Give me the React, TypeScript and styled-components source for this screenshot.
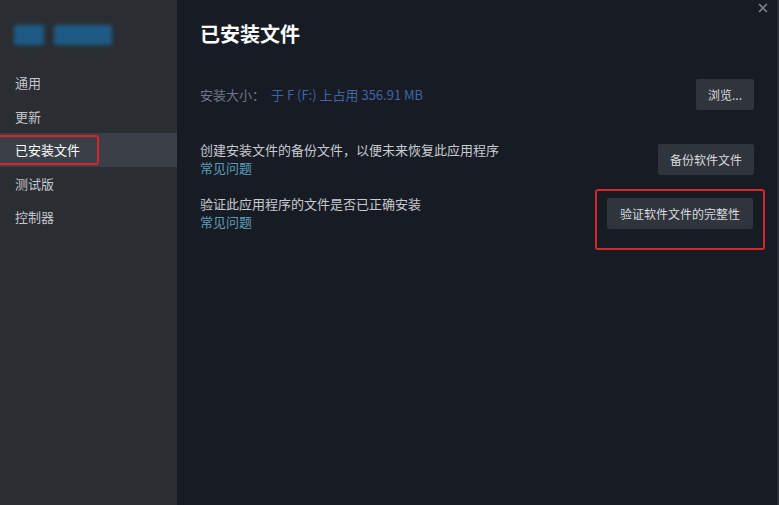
import React from 'react';
import styled, { createGlobalStyle } from 'styled-components';

const GlobalStyle = createGlobalStyle`
  html, body {
    margin: 0;
    padding: 0;
    background: #171c24;
  }
  body {
    font-family: "Noto Sans CJK SC", "Noto Sans", sans-serif;
  }
`;

const navItems = ['通用', '更新', '已安装文件', '测试版', '控制器'];

const App: React.FC = () => {
  return (
    <>
      <GlobalStyle />
      <Window>
        <Sidebar>
          <Logo>
            <LogoBlock $w={30} />
            <LogoBlock $w={58} />
          </Logo>
          <Nav>
            {navItems.map((item) => (
              <NavItem key={item} $active={item === '已安装文件'}>
                {item === '已安装文件' ? <Marked>{item}</Marked> : item}
              </NavItem>
            ))}
          </Nav>
        </Sidebar>
        <Main>
          <Close viewBox="0 0 10 10" aria-label="关闭">
            <path d="M1 1 L9 9 M9 1 L1 9" />
          </Close>
          <Title>已安装文件</Title>
          <SizeRow>
            <SizeText>
              <Label>安装大小：</Label>
              <Value>于 F (F:) 上占用 356.91 MB</Value>
            </SizeText>
            <Button>浏览...</Button>
          </SizeRow>
          <Row $gap={31}>
            <Info>
              <Desc>创建安装文件的备份文件，以便未来恢复此应用程序</Desc>
              <Faq>常见问题</Faq>
            </Info>
            <Button>备份软件文件</Button>
          </Row>
          <Row $gap={12}>
            <Info>
              <Desc>验证此应用程序的文件是否已正确安装</Desc>
              <Faq>常见问题</Faq>
            </Info>
            <Highlight>
              <Button $wide>验证软件文件的完整性</Button>
            </Highlight>
          </Row>
        </Main>
      </Window>
    </>
  );
};

const Window = styled.div`
  display: flex;
  width: 779px;
  height: 505px;
  overflow: hidden;
`;

const Sidebar = styled.aside`
  width: 177px;
  flex-shrink: 0;
  background: #2a2d32;
  padding-top: 25px;
  box-sizing: border-box;
`;

const Logo = styled.div`
  display: flex;
  gap: 10px;
  margin-left: 14px;
  height: 20px;
  filter: blur(2px);
`;

const LogoBlock = styled.div<{ $w: number }>`
  width: ${(p) => p.$w}px;
  height: 20px;
  background: #1d5b86;
`;

const Nav = styled.nav`
  display: flex;
  flex-direction: column;
  margin-top: 21px;
`;

const NavItem = styled.div<{ $active?: boolean }>`
  height: 33.5px;
  display: flex;
  align-items: center;
  padding-left: ${(p) => (p.$active ? '0' : '15px')};
  font-size: 13px;
  color: ${(p) => (p.$active ? '#ffffff' : '#c3c6cc')};
  background: ${(p) => (p.$active ? '#3b3f47' : 'transparent')};
`;

const Marked = styled.span`
  display: inline-flex;
  align-items: center;
  height: 26px;
  padding: 0 17px 0 15px;
  border: 2px solid #d4262b;
  border-left: none;
  border-radius: 0 3px 3px 0;
`;

const Main = styled.main`
  position: relative;
  flex: 1;
  background: #171c24;
  padding: 19px 23px 0 23px;
  box-sizing: border-box;
  border-right: 2px solid #2a2e36;
`;

const Close = styled.svg`
  position: absolute;
  top: 3px;
  right: 9px;
  width: 10px;
  height: 10px;
  stroke: #7b808a;
  stroke-width: 1.6;
  fill: none;
`;

const Title = styled.h1`
  margin: 0;
  font-size: 20px;
  font-weight: 700;
  color: #ffffff;
  line-height: 30px;
`;

const SizeRow = styled.div`
  display: flex;
  justify-content: space-between;
  align-items: center;
  margin-top: 30px;
`;

const SizeText = styled.div`
  display: flex;
  gap: 6px;
  font-size: 13px;
`;

const Label = styled.span`
  color: #6f7786;
`;

const Value = styled.span`
  color: #3f64a8;
`;

const Row = styled.div<{ $gap: number }>`
  display: flex;
  justify-content: space-between;
  align-items: center;
  margin-top: ${(p) => p.$gap}px;
`;

const Info = styled.div`
  display: flex;
  flex-direction: column;
  font-size: 13px;
  line-height: 18px;
`;

const Desc = styled.span`
  color: #c7cad0;
`;

const Faq = styled.span`
  color: #5b9fba;
`;

const Button = styled.button<{ $wide?: boolean }>`
  height: 31px;
  padding: 0 ${(p) => (p.$wide ? '13px' : '12px')};
  border: none;
  border-radius: 2px;
  background: #30343c;
  color: #d9dbdf;
  font-family: inherit;
  font-size: 12px;
`;

const Highlight = styled.div`
  margin-right: -11px;
  padding: 7px 10px 19px 10px;
  border: 2px solid #d4262b;
  border-radius: 3px;
  margin-bottom: -14px;
`;

export default App;
